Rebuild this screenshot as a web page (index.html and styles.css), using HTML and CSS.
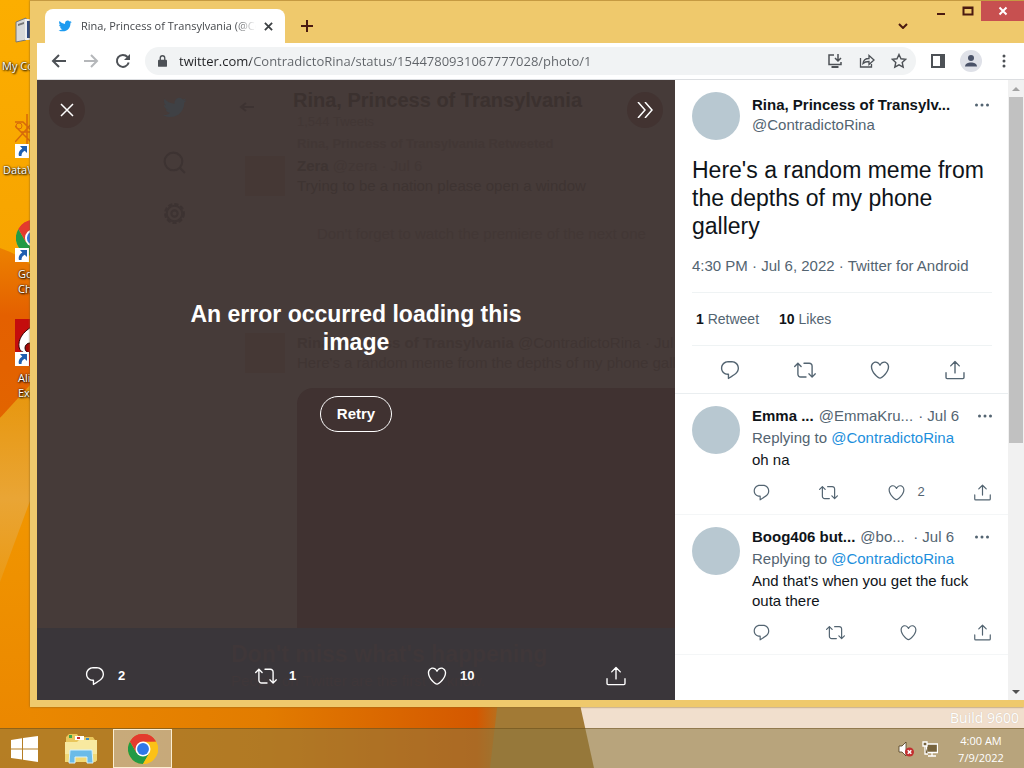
FILE: index.html
```html
<!DOCTYPE html>
<html lang="en">
<head>
  <meta charset="UTF-8">
  <title>Rina, Princess of Transylvania</title>
  <link rel="stylesheet" href="styles.css">
</head>
<body>
  <!-- Shared icons -->
  <svg class="sprite" aria-hidden="true">
    <symbol id="bird" viewBox="0 0 24 24"><path d="M23.643 4.937c-.835.37-1.732.62-2.675.733.962-.576 1.7-1.49 2.048-2.578-.9.534-1.897.922-2.958 1.13-.85-.904-2.06-1.47-3.4-1.47-2.572 0-4.658 2.086-4.658 4.66 0 .364.042.718.12 1.06-3.873-.195-7.304-2.05-9.602-4.868-.4.69-.63 1.49-.63 2.342 0 1.616.823 3.043 2.072 3.878-.764-.025-1.482-.234-2.11-.583v.06c0 2.257 1.605 4.14 3.737 4.568-.392.106-.803.162-1.227.162-.3 0-.593-.028-.877-.082.593 1.85 2.313 3.198 4.352 3.234-1.595 1.25-3.604 1.995-5.786 1.995-.376 0-.747-.022-1.112-.065 2.062 1.323 4.51 2.093 7.14 2.093 8.57 0 13.255-7.098 13.255-13.254 0-.2-.005-.402-.014-.602.91-.658 1.7-1.477 2.323-2.41z"/></symbol>
    <symbol id="reply" viewBox="0 0 24 24"><path d="M14.046 2.242l-4.148-.01h-.002c-4.374 0-7.8 3.427-7.8 7.802 0 4.098 3.186 7.206 7.465 7.37v3.828c0 .108.044.286.12.403.142.225.384.347.632.347.138 0 .277-.038.402-.118.264-.168 6.473-4.14 8.088-5.506 1.902-1.61 3.04-3.97 3.043-6.312v-.017c-.006-4.367-3.43-7.787-7.8-7.788zm3.787 12.972c-1.134.96-4.862 3.405-6.772 4.643V16.67c0-.414-.335-.75-.75-.75h-.396c-3.66 0-6.318-2.476-6.318-5.886 0-3.534 2.768-6.302 6.3-6.302l4.147.01h.002c3.532 0 6.3 2.766 6.302 6.296-.003 1.91-.942 3.844-2.514 5.176z"/></symbol>
    <symbol id="retweet" viewBox="0 0 24 24"><path d="M23.77 15.67c-.292-.293-.767-.293-1.06 0l-2.22 2.22V7.65c0-2.068-1.683-3.75-3.75-3.75h-5.85c-.414 0-.75.336-.75.75s.336.75.75.75h5.85c1.24 0 2.25 1.01 2.25 2.25v10.24l-2.22-2.22c-.293-.293-.768-.293-1.06 0s-.294.768 0 1.06l3.5 3.5c.145.147.337.22.53.22s.383-.072.53-.22l3.5-3.5c.294-.292.294-.767 0-1.06zm-10.66 3.28H7.26c-1.24 0-2.25-1.01-2.25-2.25V6.46l2.22 2.22c.148.147.34.22.532.22s.384-.073.53-.22c.293-.293.293-.768 0-1.06l-3.5-3.5c-.293-.294-.768-.294-1.06 0l-3.5 3.5c-.294.292-.294.767 0 1.06s.767.293 1.06 0l2.22-2.22V16.7c0 2.068 1.683 3.75 3.75 3.75h5.85c.414 0 .75-.336.75-.75s-.337-.75-.75-.75z"/></symbol>
    <symbol id="like" viewBox="0 0 24 24"><path d="M12 21.638h-.014C9.403 21.59 1.95 14.856 1.95 8.478c0-3.064 2.525-5.754 5.403-5.754 2.29 0 3.83 1.58 4.646 2.73.814-1.148 2.354-2.73 4.645-2.73 2.88 0 5.404 2.69 5.404 5.755 0 6.376-7.454 13.11-10.037 13.157H12zM7.354 4.225c-2.08 0-3.903 1.988-3.903 4.255 0 5.74 7.034 11.596 8.55 11.658 1.518-.062 8.55-5.917 8.55-11.658 0-2.267-1.823-4.255-3.903-4.255-2.528 0-3.94 2.936-3.952 2.965-.23.562-1.156.562-1.387 0-.014-.03-1.425-2.965-3.954-2.965z"/></symbol>
    <symbol id="share" viewBox="0 0 24 24"><g fill="none" stroke="currentColor" stroke-width="1.5" stroke-linecap="round" stroke-linejoin="round"><path d="M12 15.2V2.8M7.3 7.5L12 2.8l4.7 4.7M2.200 15v5.200c0 .7.5 1.200 1.200 1.200h17.200c.7 0 1.200-.5 1.200-1.200V15"/></g></symbol>
    <symbol id="more" viewBox="0 0 16 16"><circle cx="2.5" cy="8" r="1.5"/><circle cx="8" cy="8" r="1.5"/><circle cx="13.5" cy="8" r="1.5"/></symbol>
    <symbol id="shortcut" viewBox="0 0 14 14"><path fill="#fff" d="M0 0h14v14H0z"/><path fill="#1f5fb0" d="M5 2h7v7L9.700 6.800C7.500 8 6.500 9.500 6.500 12H4C3 9 4.500 6.200 7.300 4.500z"/></symbol>
    <symbol id="chrome" viewBox="0 0 48 48"><circle cx="24" cy="24" r="24" fill="#fbc116"/><path fill="#e33b2e" d="M24 24L3.200 12A24 24 0 0 1 44.800 12H24z"/><path fill="#229a45" d="M3.200 12A24 24 0 0 0 24 48l10.400-18L24 24 13.600 30z"/><path fill="#fbc116" d="M44.800 12A24 24 0 0 1 24 48l10.400-18L32 13z"/><path fill="#e33b2e" d="M24 12h20.800A24 24 0 0 0 3.200 12l10.400 18L16 16z"/><circle cx="24" cy="24" r="12" fill="#fff"/><circle cx="24" cy="24" r="9.500" fill="#3078e8"/></symbol>
  </svg>

  <svg class="wallpaper" viewBox="0 0 1024 768" preserveAspectRatio="none" aria-hidden="true">
    <defs>
      <linearGradient id="sky" x2="0" y2="1"><stop offset="0" stop-color="#fcae00"/><stop offset=".4" stop-color="#f6a200"/><stop offset="1" stop-color="#ea8500"/></linearGradient>
      <linearGradient id="petal" x2="0" y2="1"><stop offset="0" stop-color="#ec8100"/><stop offset=".4" stop-color="#e46000"/><stop offset="1" stop-color="#e26400"/></linearGradient>
      <linearGradient id="wedge" x2="0" y2="1"><stop offset="0" stop-color="#e79407"/><stop offset=".6" stop-color="#e9a535"/><stop offset="1" stop-color="#eb9a15"/></linearGradient>
      <linearGradient id="glow" x2="1" y2="0"><stop offset="0" stop-color="#ea8800"/><stop offset=".5" stop-color="#e27c00"/><stop offset=".95" stop-color="#d45800"/><stop offset="1" stop-color="#b57220"/></linearGradient>
    </defs>
    <path fill="url(#sky)" d="M0 0h1024v768H0z"/>
    <path fill="url(#petal)" d="M0 248q60 20 80 110L0 418z"/>
    <path fill="url(#wedge)" d="M0 418l40-44v100L0 582z"/>
    <path fill="url(#glow)" d="M30 700h470v68H30z"/>
    <path fill="#a27a35" d="M498 700h82l16 68H490z"/>
    <path fill="#f1dfcd" d="M579 700h445v68H594z"/>
  </svg>

  <div class="shortcuts">
    <a class="shortcut computer" href="#">
      <svg viewBox="0 0 32 32"><path fill="#d8d8d8" stroke="#777" d="M1 6l10-4v22l-10 2z"/><path fill="#304a80" stroke="#eee" stroke-width="2" d="M11 4h21v19H11z"/><path fill="#777" d="M3 8l6-2v2l-6 2z"/></svg>
      <span>My Computer</span>
    </a>
    <a class="shortcut data" href="#">
      <svg viewBox="0 0 32 44"><path fill="none" stroke="#d66a0a" stroke-width="1.500" d="M0 8h8l8 8M12 0v30M0 28l18-20M0 12l18 18M6 18h14"/><circle cx="4" cy="12" r="3" fill="none" stroke="#d66a0a"/><use href="#shortcut" y="30" width="14" height="14"/></svg>
      <span>DataWorks</span>
    </a>
    <a class="shortcut google" href="#">
      <svg viewBox="0 0 32 44"><use href="#chrome" x="1" y="2" width="36" height="36"/><use href="#shortcut" y="30" width="14" height="14"/></svg>
      <span>Google<br>Chrome</span>
    </a>
    <a class="shortcut explorer" href="#">
      <svg viewBox="0 0 32 48"><path fill="#c40d0d" d="M0 1h32v47H0z"/><path fill="#fff" stroke="#300" d="M18 8C7 14 3 22 4 29c1 8 16 9 20 3V8z"/><circle cx="15" cy="30" r="5" fill="#a40808" stroke="#200"/><use href="#shortcut" y="34" width="14" height="14"/></svg>
      <span>Alien<br>Explorer</span>
    </a>
  </div>

  <p class="build">Build 9600</p>

  <div class="window">
    <header class="tab-strip">
      <div class="tab">
        <svg class="tab-icon"><use href="#bird"/></svg>
        <span class="tab-title">Rina, Princess of Transylvania (@ContradictoRina)</span>
        <button class="tab-close" aria-label="Close tab"><svg viewBox="0 0 10 10"><path d="M1 1l8 8M9 1l-8 8"/></svg></button>
      </div>
      <button class="new-tab" aria-label="New tab"><svg viewBox="0 0 12 12"><path d="M6 0v12M0 6h12"/></svg></button>
      <button class="tab-search" aria-label="Search tabs"><svg viewBox="0 0 10 6"><path d="M1 1l4 4 4-4"/></svg></button>
      <div class="window-buttons">
        <button class="win-btn" aria-label="Minimize"><svg viewBox="0 0 12 12"><path d="M2 9h8"/></svg></button>
        <button class="win-btn" aria-label="Maximize"><svg viewBox="0 0 12 12"><path stroke-width="1" d="M1.500 2.500h9v7h-9z"/><path d="M1 3h10"/></svg></button>
        <button class="win-btn close" aria-label="Close"><svg viewBox="0 0 12 12"><path d="M2.500 2.500l7 7M9.500 2.500l-7 7"/></svg></button>
      </div>
    </header>

    <div class="toolbar">
      <button class="nav-btn" aria-label="Back"><svg viewBox="0 0 16 16"><path d="M15 8H2M8 2L2 8l6 6"/></svg></button>
      <button class="nav-btn off" aria-label="Forward"><svg viewBox="0 0 16 16"><path d="M1 8h13M8 2l6 6-6 6"/></svg></button>
      <button class="nav-btn" aria-label="Reload"><svg viewBox="0 0 16 16"><path d="M13.700 9.500A6 6 0 1 1 12.500 4"/><path fill="currentColor" stroke="none" d="M15 1v6H9z"/></svg></button>
      <div class="address">
        <svg class="lock" viewBox="0 0 10 13"><path d="M1 5h8a1 1 0 0 1 1 1v6a1 1 0 0 1-1 1H1a1 1 0 0 1-1-1V6a1 1 0 0 1 1-1z"/><path fill="none" stroke="currentColor" stroke-width="1.500" d="M2.500 5.500V3.200a2.500 2.500 0 0 1 5 0v2.300"/></svg>
        <input class="url" type="text" aria-label="Address" value="twitter.com/ContradictoRina/status/1544780931067777028/photo/1">
        <button class="nav-btn" aria-label="Install"><svg viewBox="0 0 16 16"><path stroke-width="1.500" d="M7 2H2v9.500h12V9M11 1v6.500M8 5l3 3 3-3"/><path d="M4.500 14h7"/></svg></button>
        <button class="nav-btn" aria-label="Share page"><svg viewBox="0 0 16 16"><path stroke-width="1.300" d="M1.500 5v9h11v-3M4 10.500c.3-3 2.500-5 6-5V2.500l5 4.500-5 4.500V8.500c-2.500 0-4.500.5-6 2z"/></svg></button>
        <button class="nav-btn" aria-label="Bookmark"><svg viewBox="0 0 16 16"><path stroke-width="1.400" d="M8 1.500l2 4.300 4.700.5-3.500 3.200 1 4.700L8 11.800l-4.200 2.400 1-4.700L1.300 6.300 6 5.800z"/></svg></button>
      </div>
      <button class="nav-btn" aria-label="Side panel"><svg viewBox="0 0 16 16"><path d="M2 2h12v12H2z"/><path fill="currentColor" stroke="none" d="M10 1h5v14h-5z"/></svg></button>
      <button class="nav-btn profile" aria-label="Profile"><svg viewBox="0 0 16 16"><circle cx="8" cy="5" r="3"/><path d="M2 13.500c0-5.500 12-5.500 12 0z"/></svg></button>
      <button class="nav-btn" aria-label="Menu"><svg viewBox="0 0 16 16"><g fill="currentColor" stroke="none"><circle cx="8" cy="3" r="1.500"/><circle cx="8" cy="8" r="1.500"/><circle cx="8" cy="13" r="1.500"/></g></svg></button>
    </div>

    <main class="page">
      <section class="photo">
        <!-- Timeline dimmed behind the photo viewer -->
        <div class="dimmed" aria-hidden="true">
          <div class="rail">
            <svg><use href="#bird"/></svg>
            <svg viewBox="0 0 24 24"><circle class="line" cx="11" cy="11" r="8.500"/><path class="line" d="M17 17l5 5"/></svg>
            <svg viewBox="0 0 24 24"><circle class="line" cx="12" cy="12" r="9" stroke-dasharray="4 2"/><circle class="line" cx="12" cy="12" r="7.500"/><circle class="line" cx="12" cy="12" r="3"/></svg>
          </div>
          <div class="timeline">
            <svg class="back" viewBox="0 0 16 16"><path class="line" d="M15 8H2M7 4L2 8l5 4"/></svg>
            <div class="profile-name">Rina, Princess of Transylvania</div>
            <div class="faint small">1,544 Tweets</div>
            <div class="faint retweeted">Rina, Princess of Transylvania Retweeted</div>
            <div class="post">
              <div class="thumb"></div>
              <div>
                <div><b>Zera</b> <span class="faint">@zera · Jul 6</span></div>
                <div>Trying to be a nation please open a window</div>
                <div class="quote faint">Don't forget to watch the premiere of the next one</div>
              </div>
            </div>
            <div class="post">
              <div class="thumb"></div>
              <div class="post-body">
                <div><b>Rina, Princess of Transylvania</b> @ContradictoRina · Jul 6</div>
                <div>Here's a random meme from the depths of my phone gallery</div>
                <div class="media"></div>
              </div>
            </div>
          </div>
        </div>

        <div class="viewer">
          <div class="viewer-top">
            <button class="round" aria-label="Close viewer"><svg viewBox="0 0 16 16"><path d="M2 2l12 12M14 2L2 14"/></svg></button>
            <button class="round" aria-label="Hide replies"><svg viewBox="0 0 16 16"><path d="M1 0l7 8-7 8M8 0l7 8-7 8"/></svg></button>
          </div>
          <div class="error">
            <h1>An error occurred loading this image</h1>
            <button class="retry">Retry</button>
          </div>
          <footer class="photo-bar">
            <div class="signup" aria-hidden="true"><b>Don't miss what's happening</b><span>People on Twitter are the first to know.</span></div>
            <div class="photo-actions">
              <button class="action" aria-label="Reply"><svg><use href="#reply"/></svg>2</button>
              <button class="action" aria-label="Retweet"><svg><use href="#retweet"/></svg>1</button>
              <button class="action" aria-label="Like"><svg><use href="#like"/></svg>10</button>
              <button class="action" aria-label="Share"><svg><use href="#share"/></svg></button>
            </div>
          </footer>
        </div>
      </section>

      <aside class="thread">
        <article class="tweet">
          <div class="tweet-head">
            <div class="avatar"></div>
            <div class="author">
              <a class="name" href="#">Rina, Princess of Transylv...</a>
              <a class="handle" href="#">@ContradictoRina</a>
            </div>
            <button class="more" aria-label="More"><svg><use href="#more"/></svg></button>
          </div>
          <p class="tweet-text">Here's a random meme from the depths of my phone gallery</p>
          <p class="meta">4:30 PM · Jul 6, 2022 · Twitter for Android</p>
          <div class="stats"><a href="#"><b>1</b> Retweet</a><a href="#"><b>10</b> Likes</a></div>
          <div class="tweet-actions">
            <button class="action" aria-label="Reply"><svg><use href="#reply"/></svg></button>
            <button class="action" aria-label="Retweet"><svg><use href="#retweet"/></svg></button>
            <button class="action" aria-label="Like"><svg><use href="#like"/></svg></button>
            <button class="action" aria-label="Share"><svg><use href="#share"/></svg></button>
          </div>
        </article>

        <article class="reply">
          <div class="avatar"></div>
          <div class="reply-body">
            <div class="reply-head">
              <a class="name" href="#">Emma ...</a>
              <a class="handle" href="#">@EmmaKru...</a>
              <span class="date">· Jul 6</span>
              <button class="more" aria-label="More"><svg><use href="#more"/></svg></button>
            </div>
            <p class="replying">Replying to <a href="#">@ContradictoRina</a></p>
            <p>oh na</p>
            <div class="reply-actions">
              <button class="action" aria-label="Reply"><svg><use href="#reply"/></svg></button>
              <button class="action" aria-label="Retweet"><svg><use href="#retweet"/></svg></button>
              <button class="action" aria-label="Like"><svg><use href="#like"/></svg>2</button>
              <button class="action" aria-label="Share"><svg><use href="#share"/></svg></button>
            </div>
          </div>
        </article>

        <article class="reply">
          <div class="avatar"></div>
          <div class="reply-body">
            <div class="reply-head">
              <a class="name" href="#">Boog406 but...</a>
              <a class="handle" href="#">@bo...</a>
              <span class="date">· Jul 6</span>
              <button class="more" aria-label="More"><svg><use href="#more"/></svg></button>
            </div>
            <p class="replying">Replying to <a href="#">@ContradictoRina</a></p>
            <p>And that's when you get the fuck outa there</p>
            <div class="reply-actions">
              <button class="action" aria-label="Reply"><svg><use href="#reply"/></svg></button>
              <button class="action" aria-label="Retweet"><svg><use href="#retweet"/></svg></button>
              <button class="action" aria-label="Like"><svg><use href="#like"/></svg></button>
              <button class="action" aria-label="Share"><svg><use href="#share"/></svg></button>
            </div>
          </div>
        </article>
      </aside>

      <div class="scrollbar">
        <button aria-label="Scroll up"><svg viewBox="0 0 8 4"><path fill="#a3a3a3" d="M0 4l4-4 4 4z"/></svg></button>
        <div class="track"><div class="thumb-bar"></div></div>
        <button aria-label="Scroll down"><svg viewBox="0 0 8 4"><path fill="#505050" d="M0 0l4 4 4-4z"/></svg></button>
      </div>
    </main>
  </div>

  <nav class="taskbar">
    <button class="start" aria-label="Start"><svg viewBox="0 0 27 26"><path fill="#fff" d="M0 4l11-1.700V12.500H0zM12 2.100L27 0v12.500H12zM0 13.500h11v10L0 22zM12 13.500h15V26l-15-2.200z"/></svg></button>
    <button class="start" aria-label="File Explorer"><svg viewBox="0 0 32 30"><path fill="#e9c65c" d="M1 3l3-3h8l2 3h14l2 3v21H1z"/><path fill="#3fa64a" d="M4 1h3v3H4z"/><path fill="#fff" d="M10 2h9v4h-9z"/><path fill="#c33" d="M12 3h3v2h-3z"/><path fill="#3b8bc4" d="M21 4h3v2h-3z"/><path fill="#f8e9a0" d="M0 8h12l2-2h18v20l-2 2H0z"/><path fill="#f2d976" d="M0 20h32v6l-2 2H0z"/><path fill="#6bbbe8" stroke="#d8f2fb" d="M5 16h22l1 13h-6v-6H10v6H4z"/></svg></button>
    <button class="task" aria-label="Google Chrome"><svg><use href="#chrome"/></svg></button>
    <div class="tray">
      <svg viewBox="0 0 16 16"><path fill="#fff" stroke="#4d3a1c" stroke-width=".8" d="M1 5h3l4-4v14l-4-4H1z"/><circle cx="11.500" cy="11" r="4.500" fill="#c22f2f"/><path stroke="#fff" stroke-width="1.500" d="M9.700 9.200l3.600 3.600M13.300 9.200l-3.600 3.600"/></svg>
      <svg viewBox="0 0 16 16"><g fill="#77633c" stroke="#fff" stroke-width="1.300"><path d="M4.500 3h11v8.500h-11zM6 15h8M10 12v3"/><path d="M1 1h4v4H1zM3 5v8h3"/></g></svg>
      <div class="clock"><span>4:00 AM</span><span>7/9/2022</span></div>
    </div>
  </nav>
</body>
</html>
```
FILE: styles.css
```css
* {
  box-sizing: border-box;
}
body {
  margin: 0;
  height: 100vh;
  overflow: hidden;
  position: relative;
  font-family: "Liberation Sans", Arial, sans-serif;
  font-size: 15px;
  line-height: 20px;
  color: #0f1419;
  background: #f39a00;
}
button {
  display: flex;
  align-items: center;
  justify-content: center;
  padding: 0;
  border: none;
  background: none;
  color: inherit;
  font: inherit;
  cursor: pointer;
}
a {
  color: inherit;
  text-decoration: none;
}
p, h1 {
  margin: 0;
}
svg {
  display: block;
  flex: none;
  fill: currentColor;
}
.sprite {
  position: absolute;
  width: 0;
  height: 0;
}

/* Desktop */
.wallpaper {
  position: absolute;
  width: 100%;
  height: 100%;
}
.shortcut {
  position: absolute;
  left: 15px;
  display: flex;
  flex-direction: column;
  font-family: "Open Sans", sans-serif;
  font-size: 11px;
  line-height: 15px;
  color: #fff;
  text-shadow: 1px 1px 2px #000, 0 0 2px #000;
  white-space: nowrap;
}
.shortcut svg {
  width: 32px;
}
.computer {
  top: 16px;
}
.computer span {
  margin: 10px 0 0 -13px;
}
.data {
  top: 114px;
}
.data span {
  margin: 4px 0 0 -12px;
}
.google {
  top: 218px;
}
.google span, .explorer span {
  margin: 4px 0 0 3px;
}
.explorer {
  top: 318px;
}
.build {
  position: absolute;
  right: 5px;
  bottom: 40px;
  font-family: "Open Sans", sans-serif;
  font-size: 14px;
  color: #fff;
  text-shadow: 0 0 1px #c9b8a6;
}

/* Browser window */
.window {
  position: absolute;
  inset: 0 0 61px 30px;
  display: flex;
  flex-direction: column;
  padding: 0 0 7px 7px;
  background: #efc96c;
  border-top: 1px solid #c59a42;
  box-shadow: 0 0 2px #8a6420;
  font-family: "Open Sans", sans-serif;
}
.tab-strip {
  display: flex;
  align-items: flex-start;
  height: 42px;
  padding-left: 8px;
  color: #4a1a10;
}
.tab {
  display: flex;
  align-items: center;
  align-self: flex-end;
  width: 240px;
  height: 34px;
  padding: 0 12px 0 13px;
  background: #fff;
  border-radius: 8px 8px 0 0;
}
.tab-icon {
  width: 14px;
  height: 14px;
  color: #1d9bf0;
}
.tab-title {
  flex: 1;
  margin: 0 8px 0 9px;
  overflow: hidden;
  white-space: nowrap;
  font-size: 11px;
  color: #45484c;
  mask-image: linear-gradient(90deg, #000 88%, transparent);
}
.tab-strip path {
  fill: none;
  stroke: currentColor;
  stroke-width: 2;
}
.tab-close {
  color: #3c4043;
}
.tab-close svg {
  width: 9px;
  height: 9px;
}
.new-tab {
  align-self: flex-end;
  width: 44px;
  height: 34px;
}
.new-tab svg {
  width: 12px;
  height: 12px;
}
.tab-search {
  align-self: flex-end;
  width: 24px;
  height: 34px;
  margin-left: auto;
}
.tab-search svg {
  width: 10px;
}
.window-buttons {
  display: flex;
  margin-left: 12px;
}
.win-btn {
  width: 27px;
  height: 20px;
}
.win-btn svg {
  width: 12px;
  height: 12px;
}
.win-btn.close {
  width: 43px;
  color: #fff;
  background: #c75050;
}
.toolbar {
  display: flex;
  align-items: center;
  height: 37px;
  padding: 0 10px 0 12px;
  gap: 12px;
  background: #fff;
  border-bottom: 1px solid #dcdee1;
  color: #4d5156;
}
.nav-btn {
  width: 20px;
  height: 20px;
}
.nav-btn svg {
  width: 16px;
  height: 16px;
  fill: none;
  stroke: currentColor;
  stroke-width: 2;
}
.nav-btn.off {
  color: #b5b7ba;
}
.address {
  flex: 1;
  display: flex;
  align-items: center;
  gap: 12px;
  height: 28px;
  padding: 0 7px 0 13px;
  border-radius: 14px;
  background: #f1f3f4;
}
.lock {
  width: 9px;
  height: 12px;
}
/* The host part is darker than the path */
.url {
  flex: 1;
  min-width: 0;
  padding: 0;
  border: none;
  outline: none;
  font-family: "Open Sans", sans-serif;
  font-size: 13px;
  color: transparent;
  background: linear-gradient(90deg, #202124 72px, #5f6368 72px);
  background-clip: text;
  -webkit-background-clip: text;
}
.profile {
  width: 22px;
  height: 22px;
  border-radius: 50%;
  background: #dfe1e8;
}
.profile svg {
  fill: #4a5268;
  stroke: none;
}

/* Page */
.page {
  flex: 1;
  display: flex;
  min-height: 0;
  background: #fff;
  font-family: "Liberation Sans", Arial, sans-serif;
}
.photo {
  flex: 1;
  position: relative;
  min-width: 0;
  overflow: hidden;
  background: #463b39;
  color: #fff;
}
.dimmed {
  position: absolute;
  inset: 0;
  display: flex;
  padding-left: 125px;
  color: #3e3432;
  white-space: nowrap;
}
.rail {
  display: flex;
  flex-direction: column;
  gap: 26px;
  width: 77px;
  padding-top: 15px;
}
.rail svg {
  width: 25px;
  height: 25px;
}
.rail svg:first-child {
  margin-bottom: 4px;
  color: #3f4145;
}
.line {
  fill: none;
  stroke: #3d3332;
  stroke-width: 2;
}
.timeline {
  flex: 1;
  position: relative;
  min-width: 0;
}
.back {
  position: absolute;
  top: 19px;
  width: 16px;
}
.profile-name {
  margin: 8px 0 0 54px;
  font-size: 20px;
  font-weight: bold;
  line-height: 24px;
  color: #3b312f;
}
.faint {
  color: #423735;
}
.small {
  margin-left: 58px;
  font-size: 13px;
}
.retweeted {
  margin: 2px 0 0 58px;
  font-size: 13px;
  font-weight: bold;
}
.post {
  display: flex;
  gap: 12px;
  height: 177px;
  padding: 2px 0 0 6px;
}
.post > div:last-child {
  min-width: 0;
  flex: 1;
}
.thumb {
  width: 40px;
  height: 40px;
  background: #453835;
}
.post-body {
  color: #403533;
}
.quote {
  padding: 28px 20px;
}
.media {
  height: 400px;
  margin-top: 15px;
  border-radius: 16px 0 0 0;
  background: #403231;
}
.viewer {
  position: relative;
  display: flex;
  flex-direction: column;
  height: 100%;
}
.viewer-top {
  display: flex;
  justify-content: space-between;
  padding: 12px;
}
.round {
  width: 36px;
  height: 36px;
  border-radius: 50%;
  background: #423331;
}
.round svg {
  width: 16px;
  height: 16px;
  fill: none;
  stroke: #fff;
  stroke-width: 1.5;
}
.error {
  flex: 1;
  display: flex;
  flex-direction: column;
  align-items: center;
  justify-content: center;
  padding-bottom: 36px;
}
.error h1 {
  width: 360px;
  font-size: 23px;
  line-height: 28px;
  text-align: center;
}
.retry {
  height: 36px;
  margin-top: 40px;
  padding: 0 16px;
  border: 1px solid #fff;
  border-radius: 18px;
  font-weight: bold;
}
.photo-bar {
  position: relative;
  height: 72px;
  padding: 36px 48px 0 47px;
  background: #3a363a;
}
.signup {
  position: absolute;
  left: 194px;
  top: 12px;
  display: flex;
  flex-direction: column;
  gap: 3px;
  color: #3f3739;
}
.signup b {
  font-size: 23px;
  line-height: 28px;
}
.photo-actions {
  position: relative;
  display: grid;
  grid-template-columns: 1fr 1fr 1fr 30px;
}
.action {
  justify-content: flex-start;
  gap: 12px;
  font-size: 13px;
}
.action svg {
  width: 22px;
  height: 22px;
}
.photo-actions .action {
  height: 24px;
  font-weight: bold;
}
.photo-actions .action:last-child {
  justify-content: flex-end;
}

/* Thread */
.thread {
  width: 333px;
  overflow: hidden;
}
.tweet {
  padding: 12px 16px 0 17px;
  border-bottom: 1px solid #eaeef0;
}
.tweet-head, .reply {
  display: flex;
  gap: 12px;
}
.avatar {
  flex: none;
  width: 48px;
  height: 48px;
  border-radius: 50%;
  background: #b8c8d1;
}
.author {
  display: flex;
  flex-direction: column;
  padding-top: 3px;
}
.name, .handle, .date {
  white-space: nowrap;
}
.name {
  font-weight: bold;
}
.handle, .date, .replying, .meta, .stats, .action {
  color: #536471;
}
.photo-actions .action {
  color: #fff;
}
.more {
  width: 20px;
  height: 20px;
  margin-left: auto;
  color: #536471;
}
.more svg {
  width: 16px;
  height: 16px;
}
.tweet-head .more {
  margin-top: 3px;
}
.tweet-text {
  margin-top: 16px;
  font-size: 23px;
  line-height: 28px;
}
.meta {
  padding: 16px 0;
  border-bottom: 1px solid #eff3f4;
}
.stats {
  display: flex;
  gap: 20px;
  padding: 16px 4px;
  border-bottom: 1px solid #eff3f4;
  font-size: 14px;
}
.stats b {
  color: #0f1419;
}
.tweet-actions {
  display: grid;
  grid-template-columns: repeat(4, 1fr);
  height: 47px;
}
.tweet-actions .action {
  justify-content: center;
}
.reply {
  padding: 12px 16px 12px 17px;
  border-bottom: 1px solid #f4f6f7;
}
.reply-body {
  flex: 1;
  min-width: 0;
  display: flex;
  flex-direction: column;
  gap: 2px;
}
.reply-head {
  display: flex;
  gap: 5px;
}
.reply-head .date {
  margin-left: auto;
}
.reply-head .more {
  margin-left: 13px;
}
.replying a {
  color: #1d8fdc;
}
.reply-actions {
  display: flex;
  justify-content: space-between;
  margin-top: 10px;
}
.reply-actions .action svg {
  width: 19px;
  height: 19px;
}

.scrollbar {
  display: flex;
  flex-direction: column;
  width: 16px;
  background: #f1f1f1;
}
.scrollbar button {
  height: 17px;
}
.scrollbar svg {
  width: 8px;
}
.track {
  flex: 1;
  padding: 0 1px;
}
.thumb-bar {
  height: 59%;
  background: #c1c1c1;
}

/* Taskbar */
.taskbar {
  position: absolute;
  inset: auto 0 0 0;
  display: flex;
  height: 40px;
  background: rgba(140, 120, 64, 0.57);
  border-top: 1px solid rgba(90, 60, 10, 0.4);
}
.start {
  width: 48px;
  margin-right: 9px;
}
.start svg {
  width: 27px;
}
.start + .start {
  margin-right: 8px;
}
.start + .start svg {
  width: 32px;
}
.task {
  width: 59px;
  border: 1px solid #fbeed2;
  background: rgba(208, 190, 160, 0.7);
}
.task svg {
  width: 30px;
  height: 30px;
}
.tray {
  display: flex;
  align-items: center;
  gap: 8px;
  margin-left: auto;
  padding-right: 14px;
  color: #fff;
}
.tray svg {
  width: 16px;
  height: 16px;
}
.clock {
  display: flex;
  flex-direction: column;
  width: 58px;
  margin-left: 6px;
  font-family: "Open Sans", sans-serif;
  font-size: 11px;
  line-height: 17px;
  text-align: center;
}
```
